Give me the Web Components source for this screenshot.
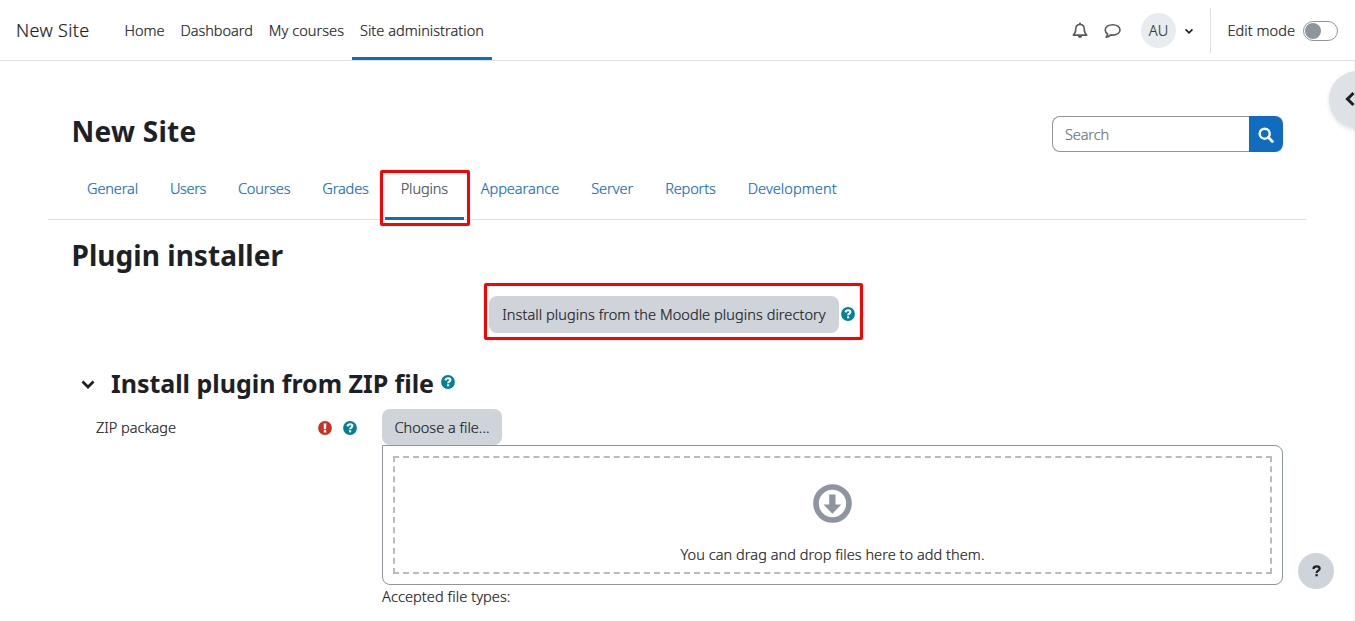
<!DOCTYPE html>
<html lang="en">
<head>
<meta charset="utf-8">
<title>Plugin installer</title>
<style>
html,body{margin:0;padding:0;height:100%;overflow:hidden;background:#fff}
body{font-family:"Noto Sans","Open Sans",sans-serif;font-size:14.5px;font-weight:300;-webkit-text-stroke:.2px currentColor;color:#1d2125}
</style>
</head>
<body>
<admin-app></admin-app>
<script>
const ICONS = {
  bell: ['0 0 16 17', '<path d="M8 1.2v1.2M1.300 13.100c1.700-1.500 2.500-3.200 2.500-6.300C3.800 4 5.500 2.500 8 2.500s4.200 1.500 4.200 4.300c0 3.100.8 4.800 2.500 6.300z" fill="none" stroke="currentColor" stroke-width="1.600" stroke-linejoin="round"/><path d="M5.800 13.700h4.400a2.200 2.200 0 0 1-4.400 0z" fill="currentColor"/><circle cx="8" cy="1.500" r="1" fill="currentColor"/>'],
  chat: ['0 0 17 16', '<path d="M8.700 1.700c4.100 0 7.300 2.300 7.300 5.200s-3.200 5.200-7.300 5.200c-.8 0-1.400-.1-2-.2-1.300 1.300-2.800 2-4.500 2.200.8-.8 1.300-1.900 1.400-3.200C2.200 9.900 1.200 8.500 1.200 6.900c0-2.900 3.400-5.200 7.500-5.200z" fill="none" stroke="currentColor" stroke-width="1.600" stroke-linejoin="round"/>'],
  down: ['0 0 16 16', '<path d="M2.500 5.500 8 11l5.500-5.500" fill="none" stroke="currentColor" stroke-width="2.700"/>'],
  left: ['0 0 16 16', '<path d="M11.500 2 5.500 8l6 6" fill="none" stroke="currentColor" stroke-width="3.100"/>'],
  search: ['0 0 16 16', '<circle cx="6.700" cy="6.700" r="5" fill="none" stroke="currentColor" stroke-width="2.500"/><path d="m10.400 10.400 4 4" stroke="currentColor" stroke-width="2.800" stroke-linecap="round"/>'],
  help: ['0 0 14 14', '<circle cx="7" cy="7" r="6.900" fill="currentColor"/><path d="M4.400 5.400C4.900 3.800 5.900 3.300 7.100 3.300c1.400 0 2.300.8 2.300 1.800 0 1.700-2.300 1.500-2.300 3.200" fill="none" stroke="#fff" stroke-width="2.100"/><path d="M6 9.300h2.200v2H6z" fill="#fff"/>'],
  required: ['0 0 14 14', '<circle cx="7" cy="7" r="6.900" fill="currentColor"/><path d="M5.600 2.400h2.800L8.100 8.300H5.900z" fill="#fff"/><path d="M5.800 9.200h2.400v2.300H5.800z" fill="#fff"/>'],
  drop: ['0 0 40 40', '<circle cx="20" cy="20" r="16.900" fill="none" stroke="currentColor" stroke-width="5.800"/><path d="M16.600 10.700h6.500v10.400h5.900L19.900 30.600l-9.100-9.500h5.800z" fill="currentColor"/>'],
  question: ['0 0 10 13', '<path d="M1.400 4.200C1.900 2.300 3.200 1.400 5.100 1.400c2 0 3.400 1 3.400 2.500C8.500 6.100 5.100 6 5.100 8.600" fill="none" stroke="currentColor" stroke-width="2.400"/><path d="M3.800 9.900h2.600v2.500H3.800z" fill="currentColor"/>']
};

customElements.define('ui-icon', class extends HTMLElement {
  connectedCallback() {
    const [box, art] = ICONS[this.getAttribute('name')];
    const w = this.getAttribute('w'), h = this.getAttribute('h') || w;
    this.attachShadow({mode:'open'}).innerHTML =
      `<style>:host{display:block;flex:none;width:${w}px;height:${h}px}svg{display:block;width:100%;height:100%}</style><svg viewBox="${box}" aria-hidden="true">${art}</svg>`;
  }
});

/* One line of text whose tracking is adjusted to fill the given width. */
customElements.define('ui-text', class extends HTMLElement {
  connectedCallback() {
    const w = +this.getAttribute('w');
    this.attachShadow({mode:'open'}).innerHTML =
      `<style>:host{display:block;flex:none;width:${w}px;white-space:nowrap}span{display:inline-block}</style><span><slot></slot></span>`;
    const s = this.shadowRoot.querySelector('span');
    s.style.letterSpacing = ((w - s.getBoundingClientRect().width) / this.textContent.length) + 'px';
  }
});

customElements.define('nav-item', class extends HTMLElement {
  connectedCallback() {
    this.attachShadow({mode:'open'}).innerHTML =
      `<style>:host{display:flex;align-items:center;padding:0 8px;height:60px;box-sizing:border-box;border-bottom:3px solid transparent;border-top:3px solid transparent}
      :host([active]){border-bottom-color:#0f6cbf}</style><slot></slot>`;
  }
});

customElements.define('tab-item', class extends HTMLElement {
  connectedCallback() {
    this.attachShadow({mode:'open'}).innerHTML =
      `<style>:host{display:flex;position:relative;box-sizing:border-box;height:50px;padding:7px 16px 0;line-height:22px;color:#0f6cbf;border-bottom:3px solid transparent}
      :host([active]){color:#495057;border-bottom-color:#0f6cbf;margin-right:.7px}
      i{display:none}:host([active]) i{display:block;position:absolute;left:-5px;right:-6px;top:0;height:50px;border:3px solid #f00;border-radius:2px}</style><slot></slot><i></i>`;
  }
});

customElements.define('ui-button', class extends HTMLElement {
  connectedCallback() {
    this.attachShadow({mode:'open'}).innerHTML =
      `<style>:host{display:flex;align-items:center;justify-content:center;box-sizing:border-box;background:#ced4da;border-radius:8px;color:#1d2125}</style><slot></slot>`;
  }
});

customElements.define('site-header', class extends HTMLElement {
  connectedCallback() {
    this.attachShadow({mode:'open'}).innerHTML = `<style>
      :host{display:flex;box-sizing:border-box;height:61px;border-bottom:1px solid #dee2e6;padding-left:16px;background:#fff}
      .brand{font-size:18px;line-height:60px;margin-right:27px}
      nav{display:flex}
      .tools{display:flex;align-items:center;height:60px;margin-left:auto;padding-right:17px}
      .grey{color:#585c60}
      .avatar{width:35px;height:35px;border-radius:50%;background:#e9ecef;color:#343a40;display:flex;align-items:center;justify-content:center;margin:0 8px 0 20px}
      .avatar ui-text{margin-left:1px}
      .rule{width:1px;height:45px;background:#dee2e6;margin:0 17px 0 16px}
      .switch{box-sizing:border-box;width:35px;height:20px;border:1px solid #8f959e;border-radius:10px;margin:2px 0 0 8px;padding:1px;display:flex}
      .switch i{width:16px;height:16px;border-radius:50%;background:#8f959e}
      </style>
      <div class="brand"><ui-text w="73.5">New Site</ui-text></div>
      <nav><nav-item><ui-text w="40">Home</ui-text></nav-item><nav-item><ui-text w="72.3">Dashboard</ui-text></nav-item><nav-item><ui-text w="75.2">My courses</ui-text></nav-item><nav-item active><ui-text w="124">Site administration</ui-text></nav-item></nav>
      <div class="tools"><ui-icon class="grey" name="bell" w="16" h="17"></ui-icon><ui-icon class="grey" name="chat" w="17" h="16" style="margin:2px 0 0 15.500px"></ui-icon>
      <div class="avatar"><ui-text w="19.5">AU</ui-text></div><ui-icon name="down" w="10" style="margin-top:2px"></ui-icon><div class="rule"></div><ui-text w="67.5">Edit mode</ui-text><div class="switch"><i></i></div></div>`;
  }
});

customElements.define('search-box', class extends HTMLElement {
  connectedCallback() {
    this.attachShadow({mode:'open'}).innerHTML = `<style>
      :host{display:flex;width:231px;height:36px}
      .field{flex:1;box-sizing:border-box;border:1px solid #8f959e;border-right:0;border-radius:8px 0 0 8px;padding-left:12px;display:flex;align-items:center;color:#6a737b}
      .go{width:34px;background:#0f6cbf;color:#fff;border-radius:0 8px 8px 0;display:flex;align-items:center;justify-content:center}
      </style><div class="field"><ui-text w="44">Search</ui-text></div><div class="go"><ui-icon name="search" w="16" style="margin-top:1px"></ui-icon></div>`;
  }
});

customElements.define('file-drop', class extends HTMLElement {
  connectedCallback() {
    this.attachShadow({mode:'open'}).innerHTML = `<style>
      :host{display:block;box-sizing:border-box;height:140px;border:1px solid #8f959e;border-radius:0 8px 8px 8px;padding:10px}
      .zone{box-sizing:border-box;height:118px;border:2px dashed #bbb;display:flex;flex-direction:column;align-items:center;padding-top:26px}
      .zone ui-icon{color:#8f959e;margin-right:1px}
      .zone ui-text{line-height:22px;margin-top:20px}
      </style><div class="zone"><ui-icon name="drop" w="39"></ui-icon><ui-text w="304">You can drag and drop files here to add them.</ui-text></div>`;
  }
});

customElements.define('admin-app', class extends HTMLElement {
  connectedCallback() {
    this.attachShadow({mode:'open'}).innerHTML = `<style>
      :host{display:block;position:relative;height:621px;overflow:hidden}
      main{box-sizing:border-box;height:560px;padding:55px 48px 0;border-right:1px solid #f1f2f3}
      .top{display:flex;justify-content:space-between;height:54px;padding:0 23px 0 23.500px}
      h1,h2,h3{margin:0;font-weight:700;color:#1d2125;-webkit-text-stroke:0}
      h1,h2{font-size:28px;line-height:34px}
      h1{line-height:31px}
      h3{font-size:25px;line-height:30px}
      .tabs{display:flex;height:50px;box-sizing:border-box;border-bottom:1px solid #dee2e6;padding-left:23px;width:1258px}
      h2{margin:18px 0 0 23.500px}
      .install{display:flex;align-items:center;box-sizing:border-box;width:379px;height:57px;margin:11px 0 0 436px;border:3px solid #f00;border-radius:2px;padding:6px 0 0 2px}
      .install ui-button{width:350px;height:37px;margin-right:2px;padding-bottom:2px}
      .teal{color:#008196}.red{color:#ca3120}
      .section{display:flex;align-items:center;height:30px;margin:28px 0 0 32px}
      .section h3{margin:0 6.500px 0 15px}
      .row{display:grid;grid-template-columns:286px 901px;margin:11px 0 0 48px}
      .label{display:flex;align-items:center;height:38px}
      .label ui-text{margin-top:-2px}
      .row ui-button{width:120px;height:36px}
      .types{line-height:22px}
      .drawer{position:absolute;left:1329px;top:71px;width:57px;height:57px;border-radius:50%;background:#dee2e6;box-shadow:0 2px 4px rgba(0,0,0,.12)}
      .drawer ui-icon{margin:20px 0 0 13px}
      .fab{position:absolute;left:1298px;top:553px;width:36px;height:36px;border-radius:50%;background:#ced4da;display:flex;align-items:center;justify-content:center}
      </style>
      <site-header></site-header>
      <main>
        <div class="top"><h1><ui-text w="125">New Site</ui-text></h1><search-box></search-box></div>
        <div class="tabs"><tab-item><ui-text w="51">General</ui-text></tab-item><tab-item><ui-text w="36">Users</ui-text></tab-item><tab-item><ui-text w="52.3">Courses</ui-text></tab-item><tab-item><ui-text w="46.4">Grades</ui-text></tab-item><tab-item active><ui-text w="47.3">Plugins</ui-text></tab-item><tab-item><ui-text w="78.5">Appearance</ui-text></tab-item><tab-item><ui-text w="42">Server</ui-text></tab-item><tab-item><ui-text w="50.5">Reports</ui-text></tab-item><tab-item><ui-text w="89">Development</ui-text></tab-item></div>
        <h2><ui-text w="211.5">Plugin installer</ui-text></h2>
        <div class="install"><ui-button><ui-text w="323.5">Install plugins from the Moodle plugins directory</ui-text></ui-button><ui-icon class="teal" name="help" w="14" style="margin-top:-1px"></ui-icon></div>
        <div class="section"><ui-icon name="down" w="16" style="margin-top:2px"></ui-icon><h3><ui-text w="323">Install plugin from ZIP file</ui-text></h3><ui-icon class="teal" name="help" w="14" style="margin-top:-2px"></ui-icon></div>
        <div class="row"><div class="label"><ui-text w="80">ZIP package</ui-text><ui-icon class="red" name="required" w="14" style="margin-left:141.500px"></ui-icon><ui-icon class="teal" name="help" w="14" style="margin-left:11px"></ui-icon></div>
          <div><ui-button><ui-text w="95">Choose a file...</ui-text></ui-button><file-drop></file-drop><div class="types"><ui-text w="128.5">Accepted file types:</ui-text></div></div></div>
      </main>
      <div class="drawer"><ui-icon name="left" w="16"></ui-icon></div>
      <div class="fab"><ui-icon name="question" w="9" h="12"></ui-icon></div>`;
  }
});
</script>
</body>
</html>
